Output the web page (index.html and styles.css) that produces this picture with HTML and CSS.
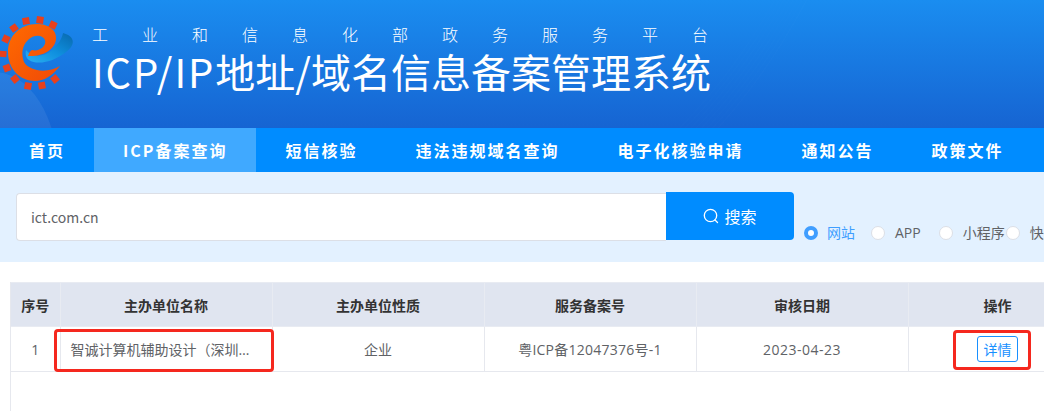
FILE: index.html
```html
<!DOCTYPE html>
<html lang="zh">
<head>
<meta charset="utf-8">
<title>ICP/IP地址/域名信息备案管理系统</title>
<link rel="stylesheet" href="styles.css">
</head>
<body>
<header class="banner">
  <svg class="logo" width="92" height="128" viewBox="0 0 92 128" aria-hidden="true">
    <defs>
      <linearGradient id="sw" x1="1" y1="0" x2="0" y2="1">
        <stop offset="0" stop-color="#0868ad"/>
        <stop offset="0.5" stop-color="#0f8fde"/>
        <stop offset="1" stop-color="#2bb0f2"/>
      </linearGradient>
      <linearGradient id="or" x1="0" y1="0" x2="1" y2="1">
        <stop offset="0" stop-color="#ff6a00"/>
        <stop offset="1" stop-color="#f04a08"/>
      </linearGradient>
    </defs>
    <g fill="#e8401c">
      <rect x="22.500" y="17.500" width="7" height="7" transform="rotate(-10 26 21)"/>
      <rect x="36.500" y="16.500" width="7" height="7" transform="rotate(8 40 20)"/>
      <rect x="49.500" y="21.500" width="7" height="7" transform="rotate(25 53 25)"/>
      <rect x="10.500" y="24.500" width="7" height="7" transform="rotate(-35 14 28)"/>
      <rect x="2.500" y="35.500" width="7" height="7" transform="rotate(-65 6 39)"/>
      <rect x="0" y="50.500" width="6" height="7" transform="rotate(-85 3 54)"/>
      <rect x="3.500" y="64.500" width="7" height="7" transform="rotate(-110 7 68)"/>
      <rect x="11.500" y="75.500" width="7" height="7" transform="rotate(-130 15 79)"/>
      <rect x="24.500" y="82.500" width="7" height="7" transform="rotate(-170 28 86)"/>
      <rect x="38.500" y="83" width="7" height="7" transform="rotate(170 42 86)"/>
      <rect x="51.500" y="75.500" width="7" height="7" transform="rotate(140 55 79)"/>
    </g>
    <path fill="url(#sw)" d="M63,33 C75,36 76,45 66,52 C55,61 38,66 29,60 C26,58 25,54 26,50 C32,58 44,57 52,50 C59,44 62,38 63,33Z"/>
    <path fill="url(#or)" d="M60,66 C52,76 44,81 35,81 C20,81 8,69 8,52 C8,36 20,24 37,24 C48,24 57,30 56,39 C55,50 42,57 28,56 C29,53 30,51 32,50 C39,52 47,46 45,40 C42,34 33,35 28,40 C22,46 21,54 24,62 C29,71 47,74 60,66Z"/>
  </svg>
  <div class="heading">
    <p class="ministry">工业和信息化部政务服务平台</p>
    <h1 class="system"><span class="system-latin">ICP/IP</span>地址/域名信息备案管理系统</h1>
  </div>
</header>

<nav class="nav">
  <a class="nav-item">首页</a>
  <a class="nav-item nav-item-active">ICP备案查询</a>
  <a class="nav-item">短信核验</a>
  <a class="nav-item">违法违规域名查询</a>
  <a class="nav-item">电子化核验申请</a>
  <a class="nav-item">通知公告</a>
  <a class="nav-item">政策文件</a>
</nav>

<section class="search">
  <input class="search-input" type="text" value="ict.com.cn">
  <button class="search-button" type="button">
    <svg width="16" height="16" viewBox="0 0 16 16" fill="none" stroke="#fff" stroke-width="1.300" aria-hidden="true">
      <circle cx="7.500" cy="7.500" r="6.200"/>
      <path d="M12 12l2.500 2.500" stroke-linecap="round"/>
    </svg>
    搜索
  </button>
  <div class="types">
    <label class="type type-selected"><span class="radio"></span>网站</label>
    <label class="type"><span class="radio"></span>APP</label>
    <label class="type type-tight"><span class="radio"></span>小程序</label>
    <label class="type"><span class="radio"></span>快应用</label>
  </div>
</section>

<main class="results">
  <table class="table">
    <colgroup>
      <col class="col-index"><col class="col-wide"><col class="col-wide"><col class="col-wide"><col class="col-wide"><col class="col-action">
    </colgroup>
    <thead>
      <tr><th>序号</th><th>主办单位名称</th><th>主办单位性质</th><th>服务备案号</th><th>审核日期</th><th>操作</th></tr>
    </thead>
    <tbody>
      <tr>
        <td>1</td>
        <td class="name-cell"><div class="name">智诚计算机辅助设计（深圳）有限公司</div></td>
        <td>企业</td>
        <td class="record">粤ICP备12047376号-1</td>
        <td class="date">2023-04-23</td>
        <td><button class="detail" type="button">详情</button></td>
      </tr>
    </tbody>
  </table>
</main>

<div class="mark mark-name"></div>
<div class="mark mark-detail"></div>
</body>
</html>
```

FILE: styles.css
```css
* { box-sizing: border-box; }
html, body {
  margin: 0;
  height: 411px;
  overflow: hidden;
  background: #fff;
  font-family: "Noto Sans CJK SC", "Noto Sans", sans-serif;
}

.banner {
  position: relative;
  height: 128px;
  display: flex;
  overflow: hidden;
  background: linear-gradient(180deg, #1a8df0 0%, #1664d2 100%);
}
.banner::before {
  content: "";
  position: absolute;
  left: -70px;
  top: 72px;
  width: 128px;
  height: 200px;
  border-radius: 50%;
  background: rgba(255, 255, 255, 0.07);
}
.banner::after {
  content: "";
  position: absolute;
  left: -380px;
  top: -920px;
  width: 1260px;
  height: 1260px;
  border-radius: 50%;
  background: repeating-radial-gradient(circle, rgba(255, 255, 255, 0) 0 3px, rgba(255, 255, 255, 0.035) 3px 4px);
  -webkit-mask-image: radial-gradient(circle, transparent 62%, #000 92%, #000 99%, transparent 100%);
  mask-image: radial-gradient(circle, transparent 62%, #000 92%, #000 99%, transparent 100%);
}
.logo { position: relative; z-index: 1; flex: none; }
.heading { position: relative; z-index: 1; color: #fff; }
.ministry {
  margin: 23px 0 0;
  font-size: 16px;
  line-height: 22px;
  letter-spacing: 34px;
  white-space: nowrap;
  font-weight: 300;
}
.system {
  margin: 1px 0 0;
  font-size: 40px;
  line-height: 50px;
  font-weight: 400;
  white-space: nowrap;
}
.system-latin { letter-spacing: 1.9px; }

.nav {
  height: 44px;
  display: flex;
  background: #008cff;
  white-space: nowrap;
}
.nav-item {
  padding: 0 29px;
  line-height: 44px;
  font-size: 16px;
  font-weight: 700;
  letter-spacing: 2px;
  color: #fff;
}
.nav-item-active { background: #40a9ff; }

.search {
  height: 90px;
  padding: 20px 0 0 16px;
  display: flex;
  align-items: flex-start;
  background: #e3f1ff;
  white-space: nowrap;
}
.search-input {
  flex: none;
  width: 650px;
  height: 48px;
  margin: 1px 0 0;
  padding: 0 14px;
  border: 1px solid #dcdfe6;
  border-right: 0;
  border-radius: 4px 0 0 4px;
  outline: 0;
  background: #fff;
  color: #606266;
  font: 14px "Noto Sans CJK SC", sans-serif;
}
.search-button {
  flex: none;
  width: 128px;
  height: 48px;
  display: flex;
  align-items: center;
  justify-content: center;
  gap: 5px;
  border: 0;
  border-radius: 0 4px 4px 0;
  background: #008cff;
  color: #fff;
  font: 16px "Noto Sans CJK SC", sans-serif;
}
.types {
  display: flex;
  margin: 31px 0 0 10px;
  color: #606266;
  font-family: "Open Sans", "Noto Sans CJK SC", sans-serif;
  font-size: 14px;
  line-height: 20px;
}
.type {
  display: flex;
  align-items: center;
  margin-right: 18px;
}
.type-tight { margin-right: 1px; }
.radio {
  width: 14px;
  height: 14px;
  margin-right: 10px;
  border: 1px solid #dcdfe6;
  border-radius: 50%;
  background: #fff;
}
.type-selected { color: #409eff; margin-right: 16px; }
.type-selected .radio {
  margin-right: 9px;
  border: 4.500px solid #409eff;
  background: #fff;
}

.results {
  margin: 20px 0 0 10px;
  height: 129px;
  width: 1200px;
  border-left: 1px solid #e6e8ee;
}
.table {
  width: 1076px;
  table-layout: fixed;
  border-collapse: collapse;
  font-family: "Open Sans", "Noto Sans CJK SC", sans-serif;
  font-size: 14px;
  text-align: center;
  color: #606266;
}
.col-index { width: 49px; }
.col-wide { width: 212px; }
.col-action { width: 179px; }
.table th {
  height: 44px;
  padding: 0;
  background: #e0e5f0;
  border: 1px solid #e8ebf2;
  border-left: 0;
  color: #333;
  font-weight: 700;
}
.table td {
  height: 45px;
  padding: 0;
  border-right: 1px solid #e6e8ee;
  border-bottom: 1px solid #e6e8ee;
}
.table .date { letter-spacing: 0.5px; }
.table .record { letter-spacing: 0.25px; }
.name-cell { text-align: left; }
.name {
  padding: 0 20px 0 10px;
  overflow: hidden;
  white-space: nowrap;
  text-overflow: ellipsis;
}
.detail {
  width: 41px;
  height: 26px;
  padding: 0;
  border: 1px solid #1890ff;
  border-radius: 3px;
  background: #fff;
  color: #1890ff;
  font: 14px "Noto Sans CJK SC", sans-serif;
}

.mark {
  position: absolute;
  border: 3px solid #f5281e;
  border-radius: 4px;
}
.mark-name { left: 54px; top: 329px; width: 220px; height: 43px; }
.mark-detail { left: 953px; top: 330px; width: 78px; height: 40px; }
```
